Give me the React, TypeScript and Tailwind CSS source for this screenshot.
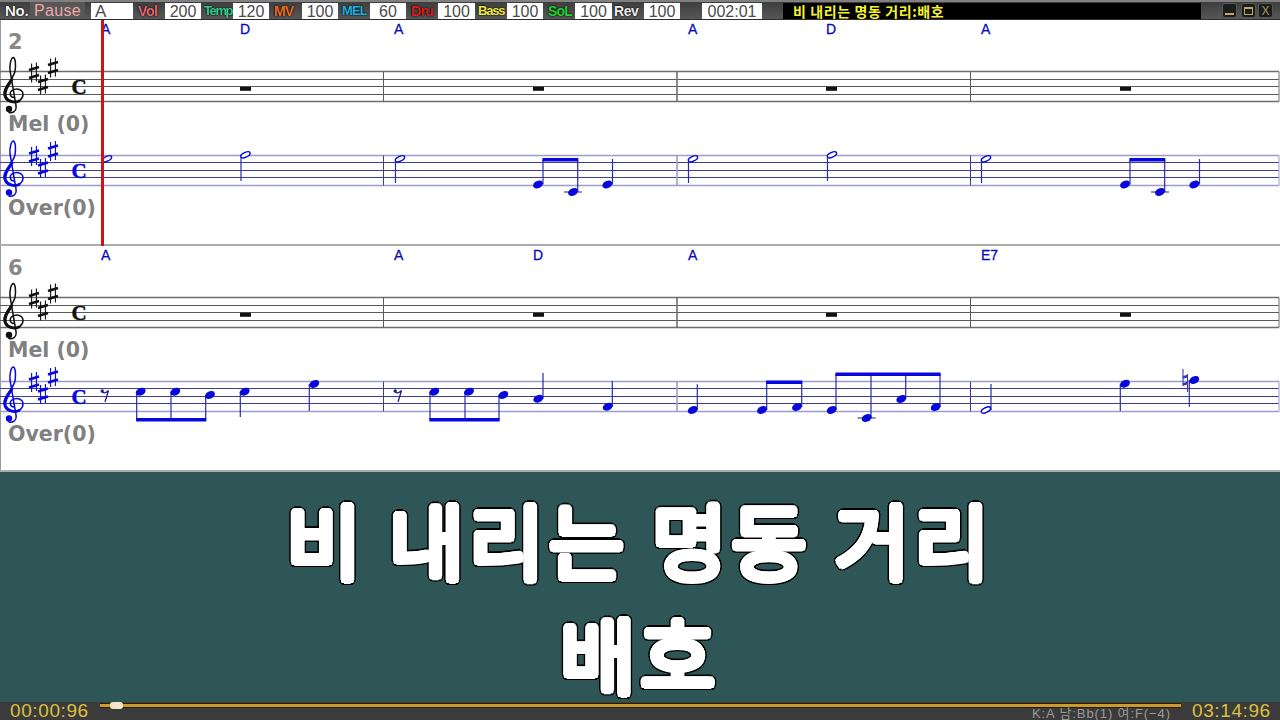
import type { ReactNode } from "react";

const BLUE = "#0808dc";

type Note = { x: number; y: number; stem: number; end: number; hollow?: boolean; ledger?: boolean };

function Sharp({ x, y, color }: { x: number; y: number; color: string }) {
  return (
    <g stroke={color} fill="none">
      <path d={`M${x - 2.4} ${y - 9}V${y + 10}M${x + 2.4} ${y - 10}V${y + 9}`} strokeWidth="1.1" />
      <path d={`M${x - 5} ${y - 2.6}L${x + 5} ${y - 5.6}M${x - 5} ${y + 5.4}L${x + 5} ${y + 2.4}`} strokeWidth="2.6" />
    </g>
  );
}

// treble clef, coordinates are relative to the top staff line
function Clef({ y, color }: { y: number; color: string }) {
  return (
    <g transform={`translate(0 ${y})`} fill="none" stroke={color} strokeLinecap="round">
      <path d="M14 26C10 26 9 21 12 19C17 16 23 18 23 23C23 28 18 31 13 30.5C7 30 3.5 26 4 21C4.5 14 13 8 15 0C16 -6 15.5 -13 13.5 -14C11 -14 9.5 -7 10 -1L16 34C17 40 12 42 9 41" strokeWidth="1.5" />
      <path d="M19 29.5C15 31.5 8 30.5 5.5 25.5C3.5 20 8 14 12 8" strokeWidth="2.8" />
      <circle cx="9" cy="37.5" r="3.2" fill={color} stroke="none" />
    </g>
  );
}

function Keyed({ top, ink }: { top: number; ink: string }) {
  return (
    <>
      <Clef y={top} color={ink} />
      <Sharp x={34} y={top + 1} color={ink} />
      <Sharp x={43} y={top + 13} color={ink} />
      <Sharp x={53} y={top - 4} color={ink} />
      <text x={71.5} y={top + 22.5} fontSize="21" fontWeight="700" fill={ink} stroke={ink} strokeWidth="0.5" fontFamily="'Liberation Serif', serif">C</text>
    </>
  );
}

function Lines({ top, gaps, outer, inner, bar }: { top: number; gaps: number[]; outer: string; inner: string; bar: string }) {
  return (
    <g>
      {gaps.map((d, i) => (
        <line key={d} x1="0" x2="1279" y1={top + d} y2={top + d} stroke={i === 0 || i === 4 ? outer : inner} strokeWidth={i === 0 || i === 4 ? 1.5 : 1} />
      ))}
      <line x1="1279" x2="1279" y1={top} y2={top + 30} stroke={outer} />
      <line x1="383.5" x2="383.5" y1={top} y2={top + 30} stroke={bar} />
      <line x1="677" x2="677" y1={top} y2={top + 30} stroke={outer} strokeWidth="1.6" />
      <line x1="970.5" x2="970.5" y1={top} y2={top + 30} stroke={bar} />
    </g>
  );
}

function Notes({ notes }: { notes: Note[] }) {
  return (
    <g>
      {notes.map(n => (
        <g key={`${n.x}-${n.y}`}>
          {n.ledger && <line x1={n.x - 9} x2={n.x + 9} y1={n.y} y2={n.y} stroke="#22226a" strokeWidth="1" />}
          <line x1={n.stem} x2={n.stem} y1={n.y} y2={n.end} stroke="#2a2aa8" strokeWidth="1.2" />
          <ellipse
            cx={n.x} cy={n.y} rx={n.hollow ? 5 : 5.2} ry={n.hollow ? 2.3 : 3.6}
            transform={`rotate(-26 ${n.x} ${n.y})`}
            fill={n.hollow ? "white" : BLUE} stroke={BLUE} strokeWidth={n.hollow ? 1.4 : 0}
          />
        </g>
      ))}
    </g>
  );
}

function Beam({ x1, x2, y }: { x1: number; x2: number; y: number }) {
  return <rect x={x1 - 0.6} y={y} width={x2 - x1 + 1.2} height="3.5" fill={BLUE} />;
}

function Rest8({ x, y }: { x: number; y: number }) {
  return (
    <g>
      <path d={`M${x - 3} ${y - 4}C${x - 2} ${y - 1} ${x + 1} ${y - 2} ${x + 3.5} ${y - 4.5}L${x} ${y + 7}`} fill="none" stroke="#22228a" strokeWidth="1.3" />
      <circle cx={x - 2.8} cy={y - 4} r="1.7" fill="#22228a" />
    </g>
  );
}

function System({ no, chords, children }: { no: number; chords: [string, number][]; children: ReactNode }) {
  return (
    <div className="h-[226px] border-b-2 border-[#acacac]">
      <svg width="1280" height="224" viewBox="0 20 1280 224" className="block">
        <line x1="0.5" x2="0.5" y1="20" y2="244" stroke="#9a9a9a" />
        <text x="8" y="49" fontSize="21" fontWeight="700" fill="#888888" fontFamily="'DejaVu Sans', sans-serif">{no}</text>
        <text x="8" y="131" fontSize="20.5" fontWeight="700" fill="#808080" fontFamily="'DejaVu Sans', sans-serif">Mel (0)</text>
        <text x="8" y="214.5" fontSize="20.5" fontWeight="700" fill="#808080" fontFamily="'DejaVu Sans', sans-serif">Over(0)</text>
        {chords.map(([c, x]) => (
          <text key={`${c}${x}`} x={x} y="34" fontSize="14" fill="#0a0ab8" stroke="#0a0ab8" strokeWidth="0.3" fontFamily="'Liberation Sans', sans-serif">{c}</text>
        ))}
        <Lines top={71.5} gaps={[0, 8, 15, 23, 30]} outer="#6e6e6e" inner="#5a5a5a" bar="#5a5a5a" />
        <Keyed top={71.5} ink="#101010" />
        {[245.5, 538.5, 831.5, 1125.5].map(x => (
          <rect key={x} x={x - 5.5} y="86.8" width="11" height="4" fill="#111111" />
        ))}
        <Lines top={155.5} gaps={[0, 7, 15, 22, 30]} outer="#9c9cce" inner="#3e3e96" bar="#3e3e96" />
        <Keyed top={155} ink={BLUE} />
        {children}
      </svg>
    </div>
  );
}

const FIELD = "h-[16px] bg-white text-[#4a4a4a] text-[16px] leading-[18px] overflow-hidden text-center font-['Liberation_Sans',sans-serif]";
const TAG = "h-[16px] text-[14px] leading-[16px] font-bold whitespace-nowrap font-['Liberation_Sans',sans-serif] [text-shadow:0_0_2px_#000,0_0_1px_#000]";
const WIN = "w-[15px] h-[15px] rounded-[3px] bg-[#1c1c1c] border border-[#555555] flex items-center justify-center";
const FONT_KR = "font-['Noto_Sans_CJK_KR',sans-serif]";
// white ring thickens the strokes and rounds their ends, black ring is the outline
const LYRIC = "text-[82px] leading-[100px] tracking-[4.5px] font-normal [text-shadow:3.5px_0_0_#fff,-3.5px_0_0_#fff,0_3.5px_0_#fff,0_-3.5px_0_#fff,2.5px_2.5px_0_#fff,-2.5px_2.5px_0_#fff,2.5px_-2.5px_0_#fff,-2.5px_-2.5px_0_#fff,1.5px_3px_0_#fff,-1.5px_3px_0_#fff,1.5px_-3px_0_#fff,-1.5px_-3px_0_#fff,3px_1.5px_0_#fff,-3px_1.5px_0_#fff,3px_-1.5px_0_#fff,-3px_-1.5px_0_#fff,5px_0_0_#000,-5px_0_0_#000,0_5px_0_#000,0_-5px_0_#000,3.5px_3.5px_0_#000,-3.5px_3.5px_0_#000,3.5px_-3.5px_0_#000,-3.5px_-3.5px_0_#000,4.5px_2px_0_#000,-4.5px_2px_0_#000,4.5px_-2px_0_#000,-4.5px_-2px_0_#000,2px_4.5px_0_#000,-2px_4.5px_0_#000,2px_-4.5px_0_#000,-2px_-4.5px_0_#000]";

export default function App() {
  return (
    <div className="w-[1280px] h-[720px] overflow-hidden bg-white flex flex-col">
      {/* top toolbar */}
      <div className="h-[20px] flex items-center bg-gradient-to-b from-[#3e3e3e] to-[#575757] border-t-2 border-t-[#808080] border-b border-b-[#2c2c2c]">
        <div className={`${TAG} text-[#f4f4f4] w-[25px] ml-[5px] !text-[15px] tracking-[-0.3px]`}>No.</div>
        <div className="w-[55px] h-[17px] bg-[#575757] text-[#f0a8a8] text-[16px] leading-[18px] tracking-[0.3px] text-center font-['Liberation_Sans',sans-serif]">Pause</div>
        <div className={`${FIELD} w-[42px] ml-[6px] !text-left pl-1 !text-[17px]`}>A</div>
        <div className={`${TAG} text-[#e06a76] w-[22px] ml-[5px] tracking-[-0.4px]`}>Vol</div>
        <div className={`${FIELD} w-[36px] ml-[5px]`}>200</div>
        <div className={`${TAG} text-[#34cc88] w-[28px] ml-[3px] !text-[13px] tracking-[-1.4px]`}>Temp</div>
        <div className={`${FIELD} w-[36px] ml-[1px]`}>120</div>
        <div className={`${TAG} text-[#e86c24] w-[24px] ml-[5px] tracking-[-0.8px]`}>MV</div>
        <div className={`${FIELD} w-[36px] ml-[4px]`}>100</div>
        <div className={`${TAG} text-[#1cb0e0] w-[26px] ml-[4px] !text-[13px] tracking-[-0.9px]`}>MEL</div>
        <div className={`${FIELD} w-[36px] ml-[2px]`}>60</div>
        <div className={`${TAG} text-[#d82020] w-[23px] ml-[5px] tracking-[-0.6px]`}>Dru</div>
        <div className={`${FIELD} w-[37px] ml-[4px]`}>100</div>
        <div className={`${TAG} text-[#f0e844] w-[28px] ml-[3px] !text-[13px] tracking-[-1.2px]`}>Bass</div>
        <div className={`${FIELD} w-[36px] ml-[1px]`}>100</div>
        <div className={`${TAG} text-[#24d034] w-[24px] ml-[5px] tracking-[-0.8px]`}>SoL</div>
        <div className={`${FIELD} w-[37px] ml-[3px]`}>100</div>
        <div className={`${TAG} text-[#ececec] w-[28px] ml-[2px] tracking-[-0.4px]`}>Rev</div>
        <div className={`${FIELD} w-[36px] ml-[2px]`}>100</div>
        <div className={`${FIELD} w-[60px] ml-[22px]`}>002:01</div>
        <div className={`ml-[21px] w-[418px] h-[16px] bg-black pl-[10px] text-[#f4f430] text-[14px] leading-[16px] font-bold tracking-[0.6px] whitespace-nowrap ${FONT_KR}`}>비 내리는 명동 거리:배호</div>
        <div className={`${WIN} ml-[21px]`}><div className="w-[9px] h-[2px] mt-[6px] bg-[#b8a860]" /></div>
        <div className={`${WIN} ml-[4px]`}><div className="w-[9px] h-[8px] border border-t-2 border-[#b8a860]" /></div>
        <div className={`${WIN} ml-[2px]`}><span className="text-[#a89860] text-[12px] leading-none font-['Liberation_Sans',sans-serif]">X</span></div>
      </div>

      {/* score */}
      <div className="relative">
        <System no={2} chords={[["A", 101], ["D", 240], ["A", 394], ["A", 688], ["D", 826], ["A", 981]]}>
          <Notes notes={[
            { x: 107, y: 158.8, stem: 102.5, end: 183, hollow: true },
            { x: 245.5, y: 154.8, stem: 241, end: 181, hollow: true },
            { x: 400, y: 158.8, stem: 395.5, end: 183, hollow: true },
            { x: 538, y: 184.5, stem: 543, end: 160 },
            { x: 573, y: 192, stem: 577.7, end: 160, ledger: true },
            { x: 607.3, y: 184.5, stem: 612.5, end: 159 },
            { x: 693, y: 158.8, stem: 688.5, end: 183, hollow: true },
            { x: 832, y: 154.8, stem: 827.5, end: 181, hollow: true },
            { x: 986, y: 158.8, stem: 981.5, end: 183, hollow: true },
            { x: 1125, y: 184.5, stem: 1130, end: 160 },
            { x: 1160, y: 192, stem: 1164.7, end: 160, ledger: true },
            { x: 1194.3, y: 184.5, stem: 1199.5, end: 159 },
          ]} />
          <Beam x1={543} x2={577.7} y={158} />
          <Beam x1={1130} x2={1164.7} y={158} />
        </System>
        <System no={6} chords={[["A", 101], ["A", 394], ["D", 533], ["A", 688], ["E7", 981]]}>
          {/* second system is drawn with the first one's coordinates, 226px higher */}
          <Rest8 x={105} y={169} />
          <Rest8 x={398} y={169} />
          <Notes notes={[
            { x: 140.7, y: 165.7, stem: 136.7, end: 194 },
            { x: 175.3, y: 165.7, stem: 171, end: 194 },
            { x: 210, y: 169, stem: 205.7, end: 194 },
            { x: 244.7, y: 165.7, stem: 240.3, end: 191 },
            { x: 314.3, y: 158, stem: 309.3, end: 185 },
            { x: 434.3, y: 165.7, stem: 430, end: 194 },
            { x: 469, y: 165.7, stem: 465, end: 194 },
            { x: 503.3, y: 169, stem: 499, end: 194 },
            { x: 538.3, y: 172.7, stem: 543, end: 147 },
            { x: 607.7, y: 180.7, stem: 612.3, end: 155 },
            { x: 692.7, y: 184, stem: 697.3, end: 158.3 },
            { x: 762, y: 184, stem: 766.7, end: 156 },
            { x: 797, y: 181, stem: 801.7, end: 156 },
            { x: 831.7, y: 184, stem: 836, end: 148 },
            { x: 866.7, y: 192, stem: 871, end: 148, ledger: true },
            { x: 901.3, y: 173, stem: 905.7, end: 148 },
            { x: 935.7, y: 181, stem: 940, end: 148 },
            { x: 986, y: 184, stem: 991, end: 158, hollow: true },
            { x: 1125, y: 157.7, stem: 1120.3, end: 185 },
            { x: 1194.3, y: 154, stem: 1189.3, end: 180.7 },
          ]} />
          <Beam x1={136.7} x2={205.7} y={192} />
          <Beam x1={430} x2={499} y={192} />
          <Beam x1={766.7} x2={801.7} y={154.5} />
          <Beam x1={836} x2={940} y={146.5} />
          <path d="M1183 143V160M1187.5 148V166" fill="none" stroke="#3838b0" strokeWidth="1.1" />
          <path d="M1183 151.5L1187.5 150M1183 158.5L1187.5 157" fill="none" stroke="#3838b0" strokeWidth="2.4" />
        </System>
        {/* playhead */}
        <div className="absolute left-[101px] top-0 w-[3px] h-[226px] bg-[#cc1414]" />
      </div>

      {/* lyric panel */}
      <div className={`flex-1 bg-[#2f5656] flex flex-col items-center text-white ${FONT_KR}`}>
        <div className={`mt-[16px] ${LYRIC}`}>비 내리는 명동 거리</div>
        <div className={`mt-[14px] ${LYRIC}`}>배호</div>
      </div>

      {/* footer */}
      <div className="h-[20px] relative bg-[#3b3b3b] flex items-start overflow-hidden">
        <div className="ml-[10px] -mt-[1px] w-[90px] text-[19px] leading-[20px] tracking-[0.6px] text-[#dcc040] font-['Liberation_Sans',sans-serif]">00:00:96</div>
        <div className="relative mt-[1px] w-[1081px] h-[5px] bg-[#c89a30] border-y border-[#2a2000]">
          <div className="absolute left-[10px] -top-[2px] w-[13px] h-[7px] rounded-[3px] bg-[#f4e4c8]" />
        </div>
        <div className={`absolute left-[1032px] top-[4px] text-[13px] leading-[15px] tracking-[0.9px] text-[#9a9a9a] whitespace-nowrap font-['Liberation_Sans','Noto_Sans_CJK_KR',sans-serif]`}>K:A 남:Bb(1) 여:F(−4)</div>
        <div className="ml-[11px] -mt-[1px] text-[19px] leading-[20px] tracking-[0.6px] text-[#dcc040] font-['Liberation_Sans',sans-serif]">03:14:96</div>
      </div>
    </div>
  );
}
